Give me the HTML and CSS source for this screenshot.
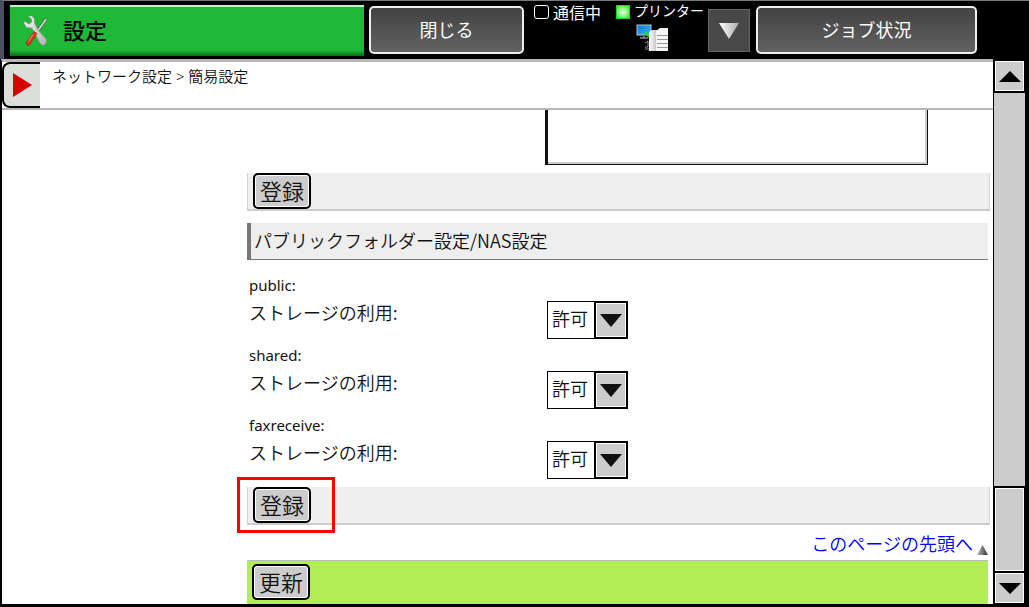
FILE: index.html
```html
<!DOCTYPE html>
<html lang="ja">
<head>
    <meta charset="UTF-8">
    <meta name="viewport" content="width=device-width, initial-scale=1.0">
    <title>設定</title>
    <link rel="stylesheet" href="styles.css">
</head>
<body>
    <header class="topbar">
        <h1 class="title">
            <svg class="tools" width="30" height="34" viewBox="0 0 30 34">
                <defs>
                    <linearGradient id="steel" x1="0" y1="0" x2="1" y2="1">
                        <stop offset="0" stop-color="#f4f4f4"/>
                        <stop offset="1" stop-color="#b4b4b4"/>
                    </linearGradient>
                </defs>
                <path d="M24 4.500l-8 11" stroke="#4b6a50" stroke-width="3.200" stroke-linecap="round"/>
                <path d="M24 4.500l-8 11" stroke="#d5d9d5" stroke-width="1.600" stroke-linecap="round"/>
                <path d="M6 1l4 0 2.500 3 0 4 3.500 7 8 9c2 3-1.500 8-5 5.500l-1.500-2-6-12-2-2.500-5-.5-2.500-4 .5-2.500 4 3 3-1.500 0-3.500z" fill="url(#steel)" stroke="#7d8f80" stroke-width=".6"/>
                <path d="M12 16.500l3 2-7 11c-1.500 2-5 0-3.500-2.500z" fill="#e0361c" stroke="#8c2a18" stroke-width=".6"/>
                <path d="M11 19.500l-4.500 7" stroke="#ff9a80" stroke-width="1"/>
            </svg>
            <span>設定</span>
        </h1>
        <button class="key close">閉じる</button>
        <div class="status">
            <span class="lamp"></span>
            <span class="comm">通信中</span>
        </div>
        <div class="printer">
            <div class="status">
                <span class="lamp on"></span>
                <span class="name">プリンター</span>
            </div>
            <svg width="34" height="28" viewBox="0 0 34 28">
                <defs>
                    <linearGradient id="screen" x1="0" y1="0" x2="1" y2="1">
                        <stop offset="0" stop-color="#0a78d0"/>
                        <stop offset="1" stop-color="#3bb4f5"/>
                    </linearGradient>
                    <linearGradient id="machine" x1="0" y1="0" x2="1" y2="0">
                        <stop offset="0" stop-color="#ffffff"/>
                        <stop offset="1" stop-color="#b9b9b9"/>
                    </linearGradient>
                </defs>
                <rect x="1" y="1" width="14" height="10" fill="url(#screen)" stroke="#b5c8d6"/>
                <path d="M8 12v2M4 14h8" stroke="#888" stroke-width="1.500"/>
                <path d="M9 8l5 5" stroke="#18e018" stroke-width="2.500"/>
                <path d="M9 19l3-2v6h-3M9 25h5" stroke="#999" fill="none"/>
                <path d="M13 9q1-3 4-3h5v21h-9z" fill="url(#machine)"/>
                <path d="M20 7l4-3h8v23H20z" fill="#f5f5f5"/>
                <path d="M21 11.500h11M21 15.500h11M21 19.500h11M21 23.500h11" stroke="#999"/>
            </svg>
        </div>
        <button class="more" aria-label="開く">
            <svg width="20" height="16" viewBox="0 0 20 16">
                <defs>
                    <linearGradient id="shine" x1="0" y1="0" x2="1" y2="0">
                        <stop offset="0" stop-color="#fff"/>
                        <stop offset="1" stop-color="#aaa"/>
                    </linearGradient>
                </defs>
                <path d="M0 0h20l-10 16z" fill="url(#shine)"/>
            </svg>
        </button>
        <button class="key jobs">ジョブ状況</button>
    </header>

    <div class="frame">
        <div class="page">
            <nav class="crumbs">
                <button class="menu" aria-label="メニュー">
                    <svg width="20" height="24" viewBox="0 0 20 24">
                        <path d="M0 0l19 12-19 12z" fill="#d60000"/>
                    </svg>
                </button>
                <p>ネットワーク設定 &gt; 簡易設定</p>
            </nav>
            <main class="content">
                <textarea class="memo" aria-label="メモ"></textarea>
                <div class="bar"><button class="btn">登録</button></div>
                <h2>パブリックフォルダー設定/NAS設定</h2>
                <form class="folders">
                    <div class="folder">
                        <p>public:</p>
                        <label for="public">ストレージの利用:</label>
                        <span class="picker"><select id="public"><option>許可</option></select></span>
                    </div>
                    <div class="folder">
                        <p>shared:</p>
                        <label for="shared">ストレージの利用:</label>
                        <span class="picker"><select id="shared"><option>許可</option></select></span>
                    </div>
                    <div class="folder">
                        <p>faxreceive:</p>
                        <label for="faxreceive">ストレージの利用:</label>
                        <span class="picker"><select id="faxreceive"><option>許可</option></select></span>
                    </div>
                </form>
                <div class="bar marked"><button class="btn">登録</button></div>
                <div class="totop">
                    <a href="#">このページの先頭へ</a>
                    <svg width="11" height="10" viewBox="0 0 11 10">
                        <defs>
                            <linearGradient id="grey" x1="0" y1="0" x2="1" y2="0">
                                <stop offset="0" stop-color="#bbb"/>
                                <stop offset="1" stop-color="#333"/>
                            </linearGradient>
                        </defs>
                        <path d="M0 10l5.500-10 5.500 10z" fill="url(#grey)"/>
                    </svg>
                </div>
                <div class="update"><button class="btn">更新</button></div>
            </main>
        </div>
        <div class="scrollbar">
            <button class="arrow" aria-label="上へ">
                <svg width="22" height="11" viewBox="0 0 22 11"><path d="M0 11l11-11 11 11z"/></svg>
            </button>
            <div class="track"></div>
            <div class="thumb"></div>
            <button class="arrow" aria-label="下へ">
                <svg width="22" height="11" viewBox="0 0 22 11"><path d="M0 0h22l-11 11z"/></svg>
            </button>
        </div>
    </div>
</body>
</html>
```
FILE: styles.css
```css
*, *::before, *::after {
    margin: 0;
    padding: 0;
    box-sizing: border-box;
}
body {
    font-family: "Noto Sans CJK JP", sans-serif;
    font-weight: 350;
    font-size: 18px;
    display: flex;
    flex-direction: column;
    height: 100vh;
    background: #000;
    color: #111;
    overflow: hidden;
}
button, select, textarea {
    font: inherit;
    color: inherit;
    border-radius: 0;
}
svg {
    display: block;
}

/* top bar */
.topbar {
    display: flex;
    align-items: flex-start;
    height: 59px;
    padding: 5px 52px 0 6px;
    border-top: 1px solid #777;
    border-left: 4px solid #4a5060;
    color: #fff;
    font-weight: 400;
}
.title {
    display: flex;
    align-items: center;
    gap: 11px;
    width: 354px;
    height: 51px;
    padding-left: 12px;
    margin-top: -1px;
    border-top: 2px solid #c8f0cc;
    background: linear-gradient(#1eb937 88%, #0a6a14);
    color: #000;
    font-size: 22px;
    font-weight: 500;
}
.title span {
    padding-bottom: 5px;
}
.key {
    height: 48px;
    padding-bottom: 2px;
    border: 2px solid #eee;
    border-radius: 5px;
    background: linear-gradient(#424242, #626262);
}
.close {
    width: 155px;
    margin-left: 5px;
}
.status {
    display: flex;
    align-items: center;
    gap: 4px;
    height: 14px;
    line-height: 14px;
    white-space: nowrap;
}
.close + .status {
    margin: -1px 0 0 10px;
}
.lamp {
    width: 15px;
    height: 14px;
    border: 1px solid #fff;
    border-radius: 3px;
}
.lamp.on {
    border: 1px solid #1fd41f;
    border-radius: 0;
    background: radial-gradient(#f0fff0, #20f020);
}
.comm {
    font-size: 16px;
}
.name {
    padding-bottom: 4px;
    font-size: 14px;
}
.printer {
    width: 88px;
    margin: -1px 0 0 15px;
}
.printer > svg {
    margin: 5px 0 0 20px;
}
.more {
    display: flex;
    align-items: center;
    justify-content: center;
    width: 42px;
    height: 43px;
    margin: 3px 6px 0 4px;
    border: 1px solid #666;
    background: #484848;
}
.jobs {
    flex: 1;
}

/* page area */
.frame {
    flex: 1;
    display: flex;
    min-height: 0;
    margin: 0 4px 3px 1px;
}
.page {
    flex: 1;
    display: flex;
    flex-direction: column;
    min-width: 0;
    background: #fff;
    border-left: 1px solid #000;
    border-top: 3px solid #b7b7b7;
}
.crumbs {
    display: flex;
    gap: 12px;
    height: 48px;
    border-bottom: 2px solid #b7b7b7;
    font-family: "Noto Sans", "Noto Sans CJK JP", sans-serif;
    font-size: 15px;
    line-height: 28px;
}
.menu {
    width: 38px;
    height: 46px;
    padding-left: 9px;
    border: 2px solid #000;
    border-right: none;
    border-radius: 8px 0 0 8px;
    background: #dcdedc;
}
.content {
    flex: 1;
    padding: 0 5px 0 245px;
    overflow: hidden;
}
.memo {
    display: block;
    width: 383px;
    height: 55px;
    margin-left: 298px;
    border: 1px solid #111;
    border-left-width: 3px;
    border-top: none;
    box-shadow: inset -2px -2px #ccc;
    background: #fff;
    resize: none;
}
.bar {
    height: 38px;
    margin: 8px 0 12px;
    padding-left: 5px;
    margin-right: -2px;
    border: 1px solid #d4d4d4;
    border-top: none;
    border-bottom: 2px solid #ccc;
    background: #efefef;
}
.btn {
    display: block;
    width: 58px;
    height: 36px;
    padding-bottom: 3px;
    border: 2px solid #000;
    border-radius: 5px;
    background: #ccc;
    box-shadow: inset 0 0 0 1px #fff;
    font-size: 22px;
    line-height: 28px;
}
h2 {
    height: 37px;
    padding-left: 3px;
    border-left: 4px solid #777;
    border-bottom: 1px solid #777;
    background: #eee;
    font-size: 18px;
    font-weight: inherit;
    line-height: 34px;
}
.folders {
    padding: 12px 0 5px 2px;
}
.folder {
    display: grid;
    grid-template-columns: 298px 1fr;
    grid-template-rows: 27px 43px;
    line-height: 26px;
}
.folder p {
    grid-column: 1 / 3;
    font-family: "Noto Sans", sans-serif;
    font-size: 15px;
    font-weight: 400;
}
.picker {
    position: relative;
    width: 81px;
    height: 38px;
    margin-top: 2px;
}
.picker select {
    appearance: none;
    width: 100%;
    height: 100%;
    padding: 0 34px 4px 4px;
    border: 1px solid #000;
    background: #fff;
}
.picker::before {
    content: "";
    position: absolute;
    inset: 0 0 0 auto;
    width: 34px;
    border: 2px solid #000;
    background: #ccc;
    box-shadow: inset 0 0 0 1px #fff;
    pointer-events: none;
}
.picker::after {
    content: "";
    position: absolute;
    right: 6px;
    top: 13px;
    border: 11px solid transparent;
    border-top: 13px solid #111;
    border-bottom: none;
    pointer-events: none;
}
.marked {
    position: relative;
    margin: 0 -2px 0 0;
}
.marked::after {
    content: "";
    position: absolute;
    left: -11px;
    top: -10px;
    width: 98px;
    height: 56px;
    border: 3px solid #f00;
    pointer-events: none;
}
.totop {
    display: flex;
    justify-content: flex-end;
    align-items: flex-end;
    gap: 4px;
    height: 35px;
    padding-bottom: 5px;
}
.totop a {
    color: #00f;
    line-height: 22px;
    text-decoration: none;
    padding-bottom: 1px;
}
.update {
    height: 100px;
    padding: 3px 5px;
    border-top: 1px solid #bbb;
    background: #b0ee54;
}

/* scrollbar */
.scrollbar {
    display: flex;
    flex-direction: column;
    gap: 2px;
    width: 32px;
    padding: 2px 0 1px;
    border-left: 1px solid #000;
}
.arrow, .thumb {
    margin: 0 1px;
    border: 1px solid #fff;
    background: #ccc;
}
.arrow {
    display: flex;
    align-items: center;
    justify-content: center;
    height: 30px;
}
.track {
    flex: 1;
    background: #ccc;
}
.thumb {
    height: 83px;
}
```
